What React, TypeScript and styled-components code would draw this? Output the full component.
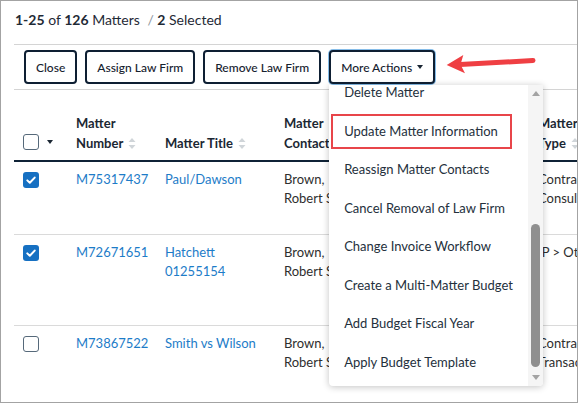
import React from "react";
import styled, { createGlobalStyle, css } from "styled-components";

const GlobalStyle = createGlobalStyle`
  html, body { margin: 0; padding: 0; background: #fff; }
  body { font-family: Lato, "Open Sans", sans-serif; }
  *, *::before, *::after { box-sizing: border-box; }
`;

const Frame = styled.div`
  position: relative;
  width: 578px;
  height: 403px;
  border: 1px solid #a3a3a3;
  overflow: hidden;
  background: #fff;
  padding-left: 13px;
  color: #1f2a36;
  font-family: Lato, "Open Sans", sans-serif;
`;

const Summary = styled.div`
  height: 43px;
  padding: 9px 0 0 1px;
  font-size: 14px;
  line-height: 20px;
  color: #1f2a36;
  white-space: nowrap;
`;

const Strong = styled.b`
  font-weight: 700;
`;

const Slash = styled.span`
  color: #8d969e;
  margin-left: 4px;
`;

const Toolbar = styled.div`
  display: flex;
  align-items: center;
  gap: 8px;
  padding: 5px 0 5px 10px;
  border-top: 1px solid #d4d4d4;
  border-bottom: 1px solid #d4d4d4;
`;

const Button = styled.button<{ $focused?: boolean }>`
  height: 34px;
  padding: 0 10px;
  margin: 0;
  border: 2px solid #0e1f33;
  border-radius: 4px;
  background: #fff;
  font-family: Lato, "Open Sans", sans-serif;
  font-size: 12px;
  font-weight: 500;
  color: #15212e;
  display: inline-flex;
  align-items: center;
  gap: 5px;
  white-space: nowrap;
  cursor: pointer;
  ${(p) =>
    p.$focused &&
    css`
      box-shadow: 0 0 0 1px #86bde9;
    `}
`;

const Caret = styled.span<{ $color?: string }>`
  display: inline-block;
  width: 0;
  height: 0;
  border-left: 3.5px solid transparent;
  border-right: 3.5px solid transparent;
  border-top: 4px solid ${(p) => p.$color || "#1a2633"};
`;

const MenuAnchor = styled.div`
  position: relative;
  display: flex;
`;

const Menu = styled.div`
  position: absolute;
  top: calc(100% + 1px);
  left: 0;
  width: 214px;
  height: 301px;
  display: flex;
  background: #fff;
  border-radius: 0 0 4px 4px;
  box-shadow: 0 1px 7px rgba(0, 0, 0, 0.24);
  overflow: hidden;
  z-index: 5;
`;

const MenuList = styled.ul`
  flex: 1;
  margin: 0;
  padding: 0 0 6px;
  list-style: none;
  overflow-y: scroll;
  scrollbar-width: none;
  &::-webkit-scrollbar {
    display: none;
  }
`;

const MenuItem = styled.li<{ $marked?: boolean }>`
  position: relative;
  height: 38.5px;
  padding-left: 15px;
  display: flex;
  align-items: center;
  font-size: 13px;
  color: #24303c;
  white-space: nowrap;
  ${(p) =>
    p.$marked &&
    css`
      &::after {
        content: "";
        position: absolute;
        left: 2px;
        right: 16px;
        top: 2px;
        bottom: 1px;
        border: 2px solid #e8454a;
      }
    `}
`;

const ScrollBar = styled.div`
  width: 15px;
  display: flex;
  flex-direction: column;
  background: #f5f5f5;
`;

const ScrollArrow = styled.div<{ $down?: boolean }>`
  height: 17px;
  display: flex;
  align-items: center;
  justify-content: center;
  &::before {
    content: "";
    width: 0;
    height: 0;
    border-left: 4.5px solid transparent;
    border-right: 4.5px solid transparent;
    ${(p) =>
      p.$down
        ? css`
            border-top: 5px solid #a3a3a3;
          `
        : css`
            border-bottom: 5px solid #a3a3a3;
          `}
  }
`;

const ScrollTrack = styled.div`
  flex: 1;
  display: flex;
  flex-direction: column;
  justify-content: flex-end;
  align-items: center;
  padding-bottom: 2px;
`;

const ScrollThumb = styled.div`
  width: 9px;
  height: 143px;
  border-radius: 5px;
  background: #8f8f8f;
`;

const COLS = "62px 89px 119px 90px 164px 100px";

const HeadRow = styled.div`
  display: grid;
  grid-template-columns: ${COLS};
  align-items: end;
  height: 72px;
  padding-bottom: 7px;
  border-bottom: 2px solid #0f2236;
  width: 624px;
`;

const HeadCell = styled.div`
  font-size: 13px;
  font-weight: 700;
  line-height: 20px;
  color: #1b2733;
  white-space: nowrap;
`;

const SelectCell = styled.div<{ $head?: boolean }>`
  display: flex;
  align-items: center;
  gap: 8px;
  padding-left: 9px;
  ${(p) =>
    p.$head
      ? css`
          margin-bottom: 3px;
        `
      : css`
          height: 19px;
        `}
`;

const Box = styled.span<{ $checked?: boolean }>`
  width: 16px;
  height: 16px;
  border-radius: 3px;
  display: inline-flex;
  align-items: center;
  justify-content: center;
  ${(p) =>
    p.$checked
      ? css`
          background: #1670c2;
        `
      : css`
          border: 1.5px solid #56697a;
          background: #fff;
        `}
`;

const SortGlyph = styled.svg`
  display: inline-block;
  vertical-align: -2px;
  margin-left: 5px;
`;

const Row = styled.div<{ $h: number }>`
  display: grid;
  grid-template-columns: ${COLS};
  align-items: start;
  height: ${(p) => p.$h}px;
  padding-top: 8px;
  border-bottom: 1px solid #dadada;
  font-size: 13px;
  line-height: 19px;
  color: #2e2e2e;
  width: 624px;
`;

const Cell = styled.div`
  padding-right: 8px;
`;

const Link = styled.a`
  color: #1d7cc8;
  text-decoration: none;
`;

const Annotation = styled.svg`
  position: absolute;
  left: 439px;
  top: 49px;
  pointer-events: none;
`;

const Sort = () => (
  <SortGlyph width="8" height="13" viewBox="0 0 8 13">
    <path d="M0.5 5 L4 1 L7.5 5 Z" fill="#d0d5d9" />
    <path d="M0.5 8 L4 12 L7.5 8 Z" fill="#d0d5d9" />
  </SortGlyph>
);

const Check = ({ checked }: { checked?: boolean }) => (
  <Box $checked={checked}>
    {checked && (
      <svg width="16" height="16" viewBox="0 0 16 16">
        <path
          d="M4.3 8.4 L6.8 10.8 L11.7 5.6"
          fill="none"
          stroke="#fff"
          strokeWidth="2"
          strokeLinecap="round"
          strokeLinejoin="round"
        />
      </svg>
    )}
  </Box>
);

const menuItems = [
  "Delete Matter",
  "Update Matter Information",
  "Reassign Matter Contacts",
  "Cancel Removal of Law Firm",
  "Change Invoice Workflow",
  "Create a Multi-Matter Budget",
  "Add Budget Fiscal Year",
  "Apply Budget Template",
];

const rows = [
  {
    checked: true,
    number: "M75317437",
    title: "Paul/Dawson",
    contact: "Brown, Robert Smith",
    status: "Open",
    type: "Contract > Consulting",
    h: 73,
  },
  {
    checked: true,
    number: "M72671651",
    title: "Hatchett 01255154",
    contact: "Brown, Robert Smith",
    status: "Open",
    type: "IP > Other",
    h: 91,
  },
  {
    checked: false,
    number: "M73867522",
    title: "Smith vs Wilson",
    contact: "Brown, Robert Smith",
    status: "Open",
    type: "Contract > Transactional",
    h: 80,
  },
];

export default function App() {
  const listRef = React.useCallback((el: HTMLUListElement | null) => {
    if (el) el.scrollTop = 12;
  }, []);

  return (
    <>
      <GlobalStyle />
      <Frame>
        <Summary>
          <Strong>1-25</Strong> of <Strong>126</Strong> Matters <Slash>/</Slash>{" "}
          <Strong>2</Strong> Selected
        </Summary>

        <Toolbar>
          <Button>Close</Button>
          <Button>Assign Law Firm</Button>
          <Button>Remove Law Firm</Button>
          <MenuAnchor>
            <Button $focused>
              More Actions <Caret />
            </Button>
            <Menu>
              <MenuList ref={listRef}>
                {menuItems.map((m) => (
                  <MenuItem key={m} $marked={m === "Update Matter Information"}>
                    {m}
                  </MenuItem>
                ))}
              </MenuList>
              <ScrollBar>
                <ScrollArrow />
                <ScrollTrack>
                  <ScrollThumb />
                </ScrollTrack>
                <ScrollArrow $down />
              </ScrollBar>
            </Menu>
          </MenuAnchor>
        </Toolbar>

        <HeadRow>
          <SelectCell $head>
            <Check />
            <Caret $color="#1b2733" />
          </SelectCell>
          <HeadCell>
            Matter
            <br />
            Number
            <Sort />
          </HeadCell>
          <HeadCell>
            Matter Title
            <Sort />
          </HeadCell>
          <HeadCell>
            Matter
            <br />
            Contact
            <Sort />
          </HeadCell>
          <HeadCell>
            Matter
            <br />
            Status
            <Sort />
          </HeadCell>
          <HeadCell>
            Matter
            <br />
            Type
            <Sort />
          </HeadCell>
        </HeadRow>

        {rows.map((r) => (
          <Row key={r.number} $h={r.h}>
            <SelectCell>
              <Check checked={r.checked} />
            </SelectCell>
            <Cell>
              <Link href="#">{r.number}</Link>
            </Cell>
            <Cell>
              <Link href="#">{r.title}</Link>
            </Cell>
            <Cell>{r.contact}</Cell>
            <Cell>{r.status}</Cell>
            <Cell>{r.type}</Cell>
          </Row>
        ))}

        <Annotation width="100" height="30" viewBox="0 0 100 30">
          <path d="M6.7 15 L23.3 5 L20.5 14.6 L25 23.3 Z" fill="#ef3f43" />
          <line
            x1="20"
            y1="14.6"
            x2="93"
            y2="10.5"
            stroke="#ef3f43"
            strokeWidth="5"
            strokeLinecap="round"
          />
        </Annotation>
      </Frame>
    </>
  );
}
